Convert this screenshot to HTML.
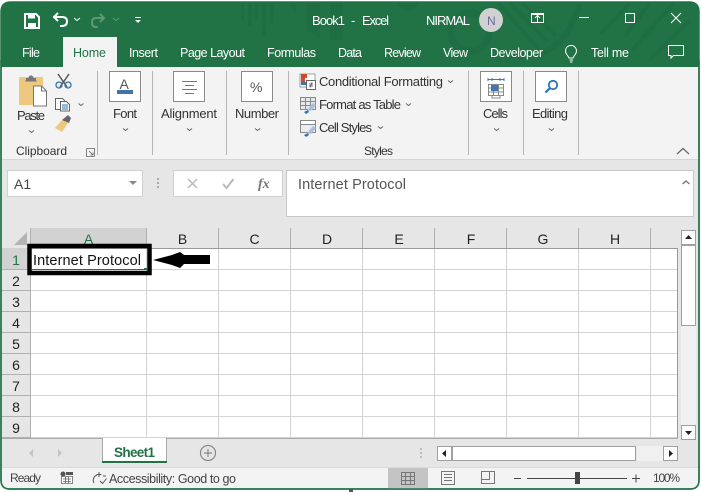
<!DOCTYPE html>
<html><head><meta charset="utf-8"><style>
html,body{margin:0;padding:0;background:#fff;width:701px;height:492px;overflow:hidden}
svg{display:block;font-family:"Liberation Sans",sans-serif}
</style></head><body>
<svg width="701" height="492" viewBox="0 0 701 492" xmlns="http://www.w3.org/2000/svg">
<rect width="701" height="492" fill="#fff"/>
<!-- window -->
<path d="M1 12Q1 2 11 2H689Q699 2 699 12V480Q699 489 690 489H10Q1 489 1 480Z" fill="#e6e6e6" stroke="#217346" stroke-width="1.500"/>
<path d="M1 12Q1 2 11 2H689Q699 2 699 12V67H1Z" fill="#217346"/>
<!-- title pattern -->
<g fill="#1f6d43">
<rect x="241" y="3" width="3" height="17"/><rect x="248" y="3" width="4" height="23"/><rect x="255" y="3" width="3" height="17"/><rect x="262" y="3" width="4" height="32"/><rect x="270" y="3" width="4" height="20"/>
<path d="M289 3h7v13zM307 3h13v36l-13-9zM330 3h13v37h-13z"/>
<path d="M397 3h21a11 11 0 0 1-21 0z"/>
</g>
<g fill="none" stroke="#1f6d43">
<circle cx="470" cy="32" r="19" stroke-width="7"/>
<path d="M498 3L540 50M510 3L548 42M522 3L556 36" stroke-width="4"/>
<path d="M500 52Q560 70 580 3" stroke-width="6"/>
<path d="M630 3L600 34M650 3L625 36M674 3L632 50M690 20L650 60" stroke-width="4"/>
</g>
<!-- QAT -->
<g fill="none" stroke="#fff">
<path d="M25 14h11l3 3v11h-14z" stroke-width="2"/>
<rect x="28" y="14.500" width="7" height="4" fill="#fff" stroke="none"/>
<rect x="28" y="23" width="8" height="5" fill="#fff" stroke="none"/>
<path d="M58 13l-4 4 4 4M54 17h8q5 0 5 4.500t-5 4.500h-2" stroke-width="2"/>
<path d="M74 18l3 2.500 3-2.500" stroke-width="1"/>
<g stroke="#5d9878"><path d="M100 14l4 4-4 4M104 18h-8q-4 0-4 4.500t4 4.500h2" stroke-width="2"/><path d="M113 18l3 2.500 3-2.500" stroke-width="1"/></g>
<path d="M135 17.500h6" stroke-width="1"/>
</g>
<path d="M135 20h6l-3 3z" fill="#fff"/>
<g fill="#fff" font-size="13">
<text x="312" y="25" textLength="33">Book1</text>
<text x="351" y="25">-</text>
<text x="362" y="25" textLength="27">Excel</text>
<text x="426" y="25" textLength="44">NIRMAL</text>
</g>
<circle cx="491" cy="20" r="12" fill="#d2d1d2"/>
<text x="487" y="25" font-size="12" fill="#6b6c9c">N</text>
<!-- window controls -->
<g fill="none" stroke="#fff">
<rect x="531.500" y="14.500" width="12" height="8" stroke-width="1"/>
<path d="M531 13.500h13M537.500 22v-6M535 18l2.500-2.500 2.500 2.500" stroke-width="1"/>
<path d="M579 17.500h10" stroke-width="1"/>
<rect x="625.500" y="13.500" width="9" height="9" stroke-width="1"/>
<path d="M671 13l10 10M681 13l-10 10" stroke-width="1"/>
</g>
<!-- tabs -->
<rect x="63" y="37" width="54" height="30" fill="#f3f3f3"/>
<g fill="#fff" font-size="12.500">
<text x="22" y="57" textLength="18">File</text>
<text x="129" y="57" textLength="29">Insert</text>
<text x="180" y="57" textLength="65">Page Layout</text>
<text x="267" y="57" textLength="49">Formulas</text>
<text x="338" y="57" textLength="24">Data</text>
<text x="384" y="57" textLength="37">Review</text>
<text x="443" y="57" textLength="25">View</text>
<text x="490" y="57" textLength="53">Developer</text>
<text x="591" y="57" textLength="38">Tell me</text>
</g>
<text x="73" y="57" textLength="33" fill="#217346" font-size="12.500">Home</text>
<g fill="none" stroke="#fff" stroke-width="1">
<path d="M569 58q-1-2-2.500-4a5.500 5.500 0 1 1 9 0q-1.500 2-2.500 4zM569.500 60h3.500M570 62h2.500"/>
<path d="M668.500 45.500h15v10h-10l-2.500 2.500v-2.500h-2.500z"/>
</g>
<!-- ribbon -->
<rect x="2" y="67" width="696" height="92" fill="#f3f3f3"/>
<rect x="2" y="159" width="696" height="1" fill="#d6d6d6"/>
<g fill="#b5b5b5">
<rect x="97" y="71" width="1" height="84"/><rect x="152" y="71" width="1" height="84"/><rect x="226" y="71" width="1" height="84"/><rect x="288" y="71" width="1" height="84"/><rect x="468" y="71" width="1" height="84"/><rect x="523" y="71" width="1" height="84"/><rect x="578" y="71" width="1" height="84"/>
</g>
<!-- paste -->
<rect x="19" y="77" width="24" height="28" rx="1" fill="#edc87e"/>
<path d="M26 80v-2h2.500a2.500 2.500 0 0 1 5 0h2.500v2l1 1.500h-12z" fill="#777"/>
<path d="M33.500 86h8l5 5v15h-13z" fill="#fff" stroke="#777"/>
<path d="M41.500 86v5h5" fill="none" stroke="#777"/>
<!-- scissors -->
<g fill="none">
<path d="M58 74l9 13M69 74l-9 13" stroke="#555" stroke-width="1.500"/>
<circle cx="59" cy="85" r="3" stroke="#2e75b6" stroke-width="1.300"/>
<circle cx="68" cy="85" r="3" stroke="#2e75b6" stroke-width="1.300"/>
</g>
<!-- copy -->
<path d="M55.500 98.500h7l2 2v9h-9z" fill="#fff" stroke="#666"/>
<path d="M60.500 101.500h6l3 3v6.500h-9z" fill="#fff" stroke="#666"/>
<path d="M62 105h6M62 107h6M62 109h6" stroke="#2e75b6"/>
<path d="M78.500 103.500l2.500 2 2.500-2" fill="none" stroke="#666"/>
<!-- brush -->
<path d="M55 128l8-9 5 4-6 9z" fill="#edc87e"/>
<path d="M62 120l6-5 3 3-2 5z" fill="#666"/>
<!-- big boxes -->
<g fill="#fff" stroke="#8a8a8a">
<rect x="109.500" y="71.500" width="31" height="30"/>
<rect x="173.500" y="71.500" width="31" height="30"/>
<rect x="241.500" y="71.500" width="31" height="30"/>
<rect x="480.500" y="71.500" width="31" height="30"/>
<rect x="535.500" y="71.500" width="31" height="30"/>
</g>
<text x="119.500" y="89" font-size="14" fill="#555">A</text>
<rect x="117" y="90" width="16" height="4" fill="#4472a8"/>
<path d="M182 81.500h15M185 85.500h9M182 89.500h15M185 93.500h9" stroke="#777" fill="none"/>
<text x="250" y="92" font-size="14" fill="#555">%</text>
<!-- cells icon -->
<path d="M488 79.500h16M488 78v3M492 78v3M500 78v3M504 78v3" stroke="#3f77b5" fill="none"/>
<path d="M488.500 84.500h15v11h-15zM488.500 88h15M488.500 92h15M493.500 84.500v11M498.500 84.500v11" fill="#fff" stroke="#888"/>
<rect x="491" y="85" width="7" height="6" fill="#3f77b5"/>
<path d="M492 96v2h8v-2" fill="none" stroke="#888"/>
<!-- search -->
<circle cx="553" cy="85" r="4.200" fill="none" stroke="#2e75b6" stroke-width="1.800"/>
<path d="M550 88l-4.500 4.500" stroke="#2e75b6" stroke-width="2.200"/>
<!-- style icons -->
<rect x="300" y="74" width="15" height="13" fill="#fff" stroke="#888" stroke-width=".8"/>
<rect x="301" y="74" width="6" height="4" fill="#d2492a"/>
<rect x="301" y="78" width="4" height="4" fill="#d2492a"/>
<rect x="301" y="82" width="6" height="3" fill="#4472a8"/>
<rect x="306.500" y="80.500" width="9" height="9" fill="#fff" stroke="#666"/>
<path d="M309 84h4M309 86h4M312 82.500l-2 5" stroke="#444" stroke-width=".8" fill="none"/>
<g fill="none" stroke="#888">
<path d="M300.500 97.500h15v12h-15zM300.500 101.500h15M300.500 105.500h15M305.500 97.500v12M310.500 97.500v12" fill="#e4e7ec"/>
<path d="M300.500 120.500h15v12h-15z" fill="#e9ecf1"/>
<path d="M300.500 120.500h15v4h-15z" fill="#fff"/>
</g>
<path d="M307 110l6-7 3 2-5 6z" fill="#aac0da"/><path d="M304 112l4-2 1 2-3 2z" fill="#2e75b6"/>
<path d="M307 133l6-7 3 2-5 6z" fill="#aac0da"/><path d="M304 135l4-2 1 2-3 2z" fill="#2e75b6"/>
<!-- ribbon text -->
<g fill="#333" font-size="13">
<text x="17" y="120" textLength="28">Paste</text>
<text x="16" y="155" textLength="51" font-size="12">Clipboard</text>
<text x="113" y="118" textLength="24">Font</text>
<text x="161" y="118" textLength="56">Alignment</text>
<text x="235" y="118" textLength="44">Number</text>
<text x="319" y="86" textLength="124">Conditional Formatting</text>
<text x="319" y="109" textLength="82">Format as Table</text>
<text x="319" y="132" textLength="53">Cell Styles</text>
<text x="364" y="155" textLength="29" font-size="12">Styles</text>
<text x="483" y="118" textLength="25">Cells</text>
<text x="532" y="118" textLength="36">Editing</text>
</g>
<g fill="none" stroke="#666">
<path d="M29 130.500l2.500 2 2.500-2M123 128.500l2.500 2 2.500-2M187 128.500l2.500 2 2.500-2M255 128.500l2.500 2 2.500-2M494 128.500l2.500 2 2.500-2M549 128.500l2.500 2 2.500-2M448 80.500l2.500 2 2.500-2M406 103.500l2.500 2 2.500-2M378 126.500l2.500 2 2.500-2"/>
<path d="M86.500 148.500h8v8M86.500 148.500v8h8M89 151l4 4M93 152.500v2.500h-2.500" stroke-width=".8"/>
<path d="M677 154l6-5.500 6 5.500" stroke-width="1.200"/>
</g>
<!-- formula bar -->
<rect x="7.500" y="170.500" width="135" height="26" fill="#fff" stroke="#d0d0d0"/>
<text x="14" y="189" font-size="14" fill="#444">A1</text>
<path d="M129 181h8l-4 4z" fill="#888"/>
<g fill="#aaa"><rect x="157" y="178" width="2" height="2"/><rect x="157" y="182" width="2" height="2"/><rect x="157" y="186" width="2" height="2"/></g>
<rect x="173.500" y="170.500" width="109" height="26" fill="#fff" stroke="#d0d0d0"/>
<path d="M188 179l9 9M197 179l-9 9" stroke="#bbb" stroke-width="1.500" fill="none"/>
<path d="M223 184l3.500 4 7-9" stroke="#bbb" stroke-width="2" fill="none"/>
<text x="258" y="188" font-size="14" font-family="Liberation Serif,serif" font-style="italic" font-weight="bold" fill="#777">fx</text>
<rect x="286.500" y="170.500" width="407" height="46" fill="#fff" stroke="#c8c8c8"/>
<text x="298" y="189" textLength="108" font-size="14.500" fill="#555">Internet Protocol</text>
<path d="M682.500 184l3.500-3 3.500 3" fill="none" stroke="#777" stroke-width="1.300"/>
<!-- sheet -->
<rect x="30" y="248" width="648" height="190" fill="#fff"/>
<rect x="30" y="228" width="116" height="20" fill="#d2d2d2"/>
<rect x="2" y="248" width="28" height="21" fill="#d2d2d2"/>
<path d="M27 232v13H14z" fill="#b4b4b4"/>
<g stroke="#d4d4d4" fill="none">
<path d="M30.500 269.500H677M30.500 290.500H677M30.500 311.500H677M30.500 332.500H677M30.500 353.500H677M30.500 374.500H677M30.500 395.500H677M30.500 416.500H677M30.500 437.500H677"/>
<path d="M146.500 248V438M218.500 248V438M290.500 248V438M362.500 248V438M434.500 248V438M506.500 248V438M578.500 248V438M650.500 248V438"/>
</g>
<g stroke="#b0b0b0" fill="none">
<path d="M146.500 228V248M218.500 228V248M290.500 228V248M362.500 228V248M434.500 228V248M506.500 228V248M578.500 228V248M650.500 228V248"/>
<path d="M30.500 228V438M2 269.500H30M2 290.500H30M2 311.500H30M2 332.500H30M2 353.500H30M2 374.500H30M2 395.500H30M2 416.500H30M2 437.500H30"/>
</g>
<path d="M30 248.500H677.500V438" fill="none" stroke="#9a9a9a"/>
<g font-size="14" fill="#222" text-anchor="middle">
<text x="88.500" y="244" fill="#217346">A</text>
<text x="182.500" y="244">B</text><text x="254.500" y="244">C</text><text x="327" y="244">D</text><text x="399" y="244">E</text><text x="471" y="244">F</text><text x="543" y="244">G</text><text x="615" y="244">H</text>
<text x="16" y="265" fill="#217346">1</text><text x="16" y="286">2</text><text x="16" y="307">3</text><text x="16" y="328">4</text><text x="16" y="349">5</text><text x="16" y="370">6</text><text x="16" y="391">7</text><text x="16" y="412">8</text><text x="16" y="433">9</text>
</g>
<!-- selection -->
<rect x="29.500" y="246" width="120" height="27" fill="none" stroke="#000" stroke-width="4.500"/>
<rect x="32" y="269" width="115" height="1" fill="#217346"/>
<rect x="144" y="268" width="3" height="2" fill="#217346"/>
<text x="33" y="265" textLength="108" font-size="14.500" fill="#111">Internet Protocol</text>
<path d="M153 260L172 255L180 252L184 255H210V264H184L180 268L172 265Z" fill="#000"/>
<!-- vertical scrollbar -->
<rect x="681" y="325" width="15" height="100" fill="#f0f0f0"/>
<rect x="681.500" y="230.500" width="14" height="14" fill="#fff" stroke="#a0a0a0"/>
<rect x="681.500" y="245.500" width="14" height="80" fill="#fff" stroke="#a0a0a0"/>
<rect x="681" y="244" width="15" height="2" fill="#a0a0a0"/>
<path d="M685 239l3.500-4 3.500 4z" fill="#222"/>
<rect x="681.500" y="425.500" width="14" height="14" fill="#fff" stroke="#a0a0a0"/>
<path d="M685 431l3.500 4 3.500-4z" fill="#222"/>
<!-- tabs bar -->
<rect x="2" y="438" width="676" height="1" fill="#a8a8a8"/>
<path d="M33 449l-4 4 4 4zM58 449l4 4-4 4z" fill="#c4c4c4"/>
<path d="M102.500 439v24M166.500 439v24" stroke="#a8a8a8"/>
<rect x="103" y="438" width="63" height="23" fill="#fff"/>
<rect x="102" y="461" width="65" height="2" fill="#217346"/>
<text x="114" y="457" textLength="41" font-size="13.500" font-weight="bold" fill="#217346">Sheet1</text>
<circle cx="208" cy="453" r="7.500" fill="none" stroke="#888" stroke-width="1.200"/>
<path d="M204 453h8M208 449v8" stroke="#888" stroke-width="1.200"/>
<g fill="#bcbcbc"><rect x="420" y="448" width="2" height="2"/><rect x="420" y="452" width="2" height="2"/><rect x="420" y="456" width="2" height="2"/></g>
<rect x="637" y="446" width="27" height="15" fill="#f0f0f0"/>
<rect x="437.500" y="446.500" width="14" height="14" fill="#fff" stroke="#a0a0a0"/>
<rect x="452.500" y="446.500" width="183" height="14" fill="#fff" stroke="#a0a0a0"/>
<rect x="663.500" y="446.500" width="14" height="14" fill="#fff" stroke="#a0a0a0"/>
<path d="M446 450l-4 3.500 4 3.500zM669 450l4 3.500-4 3.500z" fill="#222"/>
<!-- status bar -->
<rect x="2" y="467" width="696" height="21" fill="#f3f3f3"/>
<rect x="2" y="467" width="696" height="1" fill="#dadada"/>
<text x="10" y="482" textLength="31" font-size="12" fill="#444">Ready</text>
<circle cx="63" cy="474" r="2.500" fill="#555"/>
<path d="M66 472h7v3h-7z" fill="#555"/>
<path d="M61.500 476.500h11v7h-11zM63 479h8M63 481.500h8M65.500 477v6M68.500 477v6" fill="#fff" stroke="#666" stroke-width=".8"/>
<path d="M97 475a5.500 5.500 0 0 0-3 8M99 472v5M96.500 474.500h5M103 476l3 0M100 481l2.500 2.500 4-5" fill="none" stroke="#555"/>
<text x="109" y="483" textLength="127" font-size="12.500" fill="#444">Accessibility: Good to go</text>
<rect x="388" y="468" width="40" height="21" fill="#c4c4c4"/>
<path d="M401.500 472.500h13v12h-13zM401.500 476.500h13M401.500 480.500h13M405.500 472.500v12M410.500 472.500v12" fill="none" stroke="#777"/>
<path d="M441.500 471.500h13v13h-13z" fill="none" stroke="#777"/>
<path d="M444 474.500h8M444 477.500h8M444 480.500h8" stroke="#777"/>
<path d="M481.500 471.500h13v12h-13zM481.500 479.500h8v-8" fill="none" stroke="#777"/>
<path d="M514 478.500h7M527 478.500h100M632 478.500h8M636 474.500v8" stroke="#444"/>
<rect x="575" y="472" width="5" height="12" fill="#444"/>
<text x="653" y="482" textLength="27" font-size="12" fill="#444">100%</text>
<path d="M1 480Q1 489 10 489H690Q699 489 699 480" fill="none" stroke="#217346" stroke-width="1.500"/>
<path d="M1 60V480M699 60V480" stroke="#217346" stroke-width="1.500" fill="none"/>
<rect x="349" y="489" width="4" height="3" fill="#555"/>
</svg>
</body></html>
